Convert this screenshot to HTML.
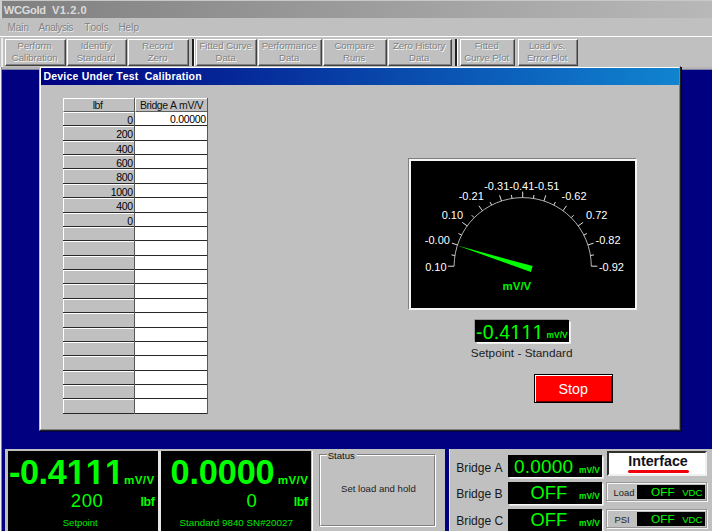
<!DOCTYPE html>
<html><head><meta charset="utf-8"><title>WCGold V1.2.0</title>
<style>
html,body{margin:0;padding:0;}
body{width:712px;height:531px;overflow:hidden;background:#000080;position:relative;font-family:"Liberation Sans",sans-serif;font-size:9px;color:#000;font-kerning:none;}
div,span{position:absolute;box-sizing:border-box;white-space:nowrap;}
#title{left:0;top:0;width:712px;height:19px;background:linear-gradient(90deg,#808080,#b8b8b8);border-top:1px solid #c8c8c8;border-left:2px solid #d0d0d0;border-bottom:1px solid #c0c0c0}
#menu{left:0;top:19px;width:712px;height:17px;background:#c0c0c0;}
.dis{color:#808080;text-shadow:0.7px 0.7px 0 #fff;}
#tool{left:0;top:36px;width:712px;height:31px;background:#c0c0c0;border-top:1px solid #fff;}
#mdiT{left:0;top:67px;width:712px;height:3px;background:#b4b4b4;border-bottom:1px solid #7e7ea4}
.tb{top:2px;height:27px;background:#c0c0c0;border:1px solid;border-color:#fff #404040 #404040 #fff;box-shadow:inset -1px -1px 0 #808080;color:#808080;text-align:center;font-size:9.65px;line-height:12.4px;padding-top:0;text-shadow:0.7px 0.7px 0 #fff;}
.tb i{font-style:normal;position:relative;display:block;margin:0 -6px;left:-0.8px;top:-0.1px}
.sep{top:2px;height:27px;width:3px;border-left:2px solid #202020;border-right:1px solid #fff;}
#mdiL{left:0;top:67px;width:1px;height:464px;background:#f4f4f4;box-shadow:1px 0 0 #8080b8;}
#win{left:39px;top:66px;width:642px;height:365px;background:#c0c0c0;border:1px solid #c0c0c0;border-right:1px solid #202020;border-bottom:1px solid #202020;box-shadow:1px 1px 0 #000050;}
#win:before{content:"";position:absolute;left:0;top:0;right:0;bottom:0;border:1px solid;border-color:#fff #808080 #808080 #fff;}
#wtitle{left:1px;top:1px;width:637.5px;height:17px;background:linear-gradient(90deg,#000080,#1084d0);}
#grid{left:63px;width:145px;background:#282828;}
.hc{background:#c0c0c0;border-top:1px solid #fff;border-left:1px solid #fff;border-bottom:1px solid #606060;text-align:center;font-size:10.5px;line-height:12px;letter-spacing:-0.45px;color:#101010}
.lc{background:#c0c0c0;border-top:1px solid #fff;border-left:1px solid #fff;text-align:right;font-size:10.5px;letter-spacing:-0.3px;padding-right:1.1px;}
.vc{background:#fff;text-align:right;font-size:10.5px;letter-spacing:-0.3px;padding-right:1.1px;}
.sunk{border:1px solid;border-color:#808080 #fff #fff #808080;background:#000;}
#gauge{left:411px;top:161px;width:224.4px;height:147.4px;background:#000;box-shadow:0 0 0 2px #f4f4f4,-1px -1px 0 2px #808080;}
#gauge svg{position:absolute;left:0;top:0;}
#dd{left:475px;top:320px;width:94.4px;height:22px;background:#000;box-shadow:1.7px 1.7px 0 0 #fff,-0.8px -0.8px 0 0 #909090;}
.g{color:#00ff00;}
#stop{left:534px;top:374px;width:78.5px;height:28.5px;background:#ff0000;border:1px solid #000;box-shadow:inset 1px 1px 0 #fff,inset -1px -1px 0 #600000;}
.pan{background:#c0c0c0;}
.blk{background:#000;}
</style></head><body>
<div id="title"></div>
<div id="menu"></div>
<div id="tool">
<div class="tb" style="left:5px;width:61px"><i>Perform<br>Calibration</i></div>
<div class="tb" style="left:67px;width:60px"><i>Identify<br>Standard</i></div>
<div class="tb" style="left:128px;width:61px"><i>Record<br>Zero</i></div>
<div class="tb" style="left:196px;width:61px"><i>Fitted Curve<br>Data</i></div>
<div class="tb" style="left:258px;width:64px"><i>Performance<br>Data</i></div>
<div class="tb" style="left:323px;width:64px"><i>Compare<br>Runs</i></div>
<div class="tb" style="left:388px;width:64px"><i>Zero History<br>Data</i></div>
<div class="tb" style="left:460px;width:55px"><i>Fitted<br>Curve Plot</i></div>
<div class="tb" style="left:518px;width:60px"><i>Load vs.<br>Error Plot</i></div>
<div style="left:1px;top:1px;width:1px;height:30px;background:#e6e6e6"></div><div style="left:2px;top:1px;width:1px;height:30px;background:#f2f2f2"></div>
<div class="sep" style="left:192px"></div><div class="sep" style="left:455px"></div>
</div>
<span style="top:3.15px;font-size:11.1px;line-height:14px;left:3.80px;color:#dcdcdc;font-weight:bold;"><i style="font-style:normal;letter-spacing:-0.3px">WCGold</i>&nbsp; <i style="font-style:normal;letter-spacing:0.55px">V1.2.0</i></span>
<span style="top:22.14px;font-size:10px;line-height:12px;left:7.40px;color:#808080;text-shadow:0.6px 0.6px 0 rgba(255,255,255,.75);">Main</span>
<span style="top:22.14px;font-size:10px;line-height:12px;left:38.60px;letter-spacing:-0.33px;color:#808080;text-shadow:0.6px 0.6px 0 rgba(255,255,255,.75);">Analysis</span>
<span style="top:22.14px;font-size:10px;line-height:12px;left:84.30px;color:#808080;text-shadow:0.6px 0.6px 0 rgba(255,255,255,.75);">Tools</span>
<span style="top:22.14px;font-size:10px;line-height:12px;left:118.40px;color:#808080;text-shadow:0.6px 0.6px 0 rgba(255,255,255,.75);">Help</span>
<div id="mdiT"></div><div id="mdiL"></div>
<div id="win"><div id="wtitle"></div></div>
<span style="top:70.06px;font-size:10.5px;line-height:13px;left:43.50px;color:#fff;font-weight:bold;letter-spacing:0.2px;white-space:pre;">Device Under Test  Calibration</span>
<div id="grid" style="top:98px;height:316px">
<div class="hc" style="left:0;top:0;width:71px;height:14px;padding-right:3px">lbf</div>
<div class="hc" style="left:72px;top:0;width:72px;height:14px">Bridge A mV/V</div>
<div class="lc" style="left:0;top:14px;width:71px;height:13px;line-height:14px">0</div>
<div class="vc" style="left:72px;top:14px;width:72px;height:13px;line-height:15px">0.00000</div>
<div class="lc" style="left:0;top:28px;width:71px;height:14px;line-height:15px">200</div>
<div class="vc" style="left:72px;top:28px;width:72px;height:14px;line-height:16px"></div>
<div class="lc" style="left:0;top:43px;width:71px;height:13px;line-height:14px">400</div>
<div class="vc" style="left:72px;top:43px;width:72px;height:13px;line-height:15px"></div>
<div class="lc" style="left:0;top:57px;width:71px;height:13px;line-height:14px">600</div>
<div class="vc" style="left:72px;top:57px;width:72px;height:13px;line-height:15px"></div>
<div class="lc" style="left:0;top:71px;width:71px;height:14px;line-height:15px">800</div>
<div class="vc" style="left:72px;top:71px;width:72px;height:14px;line-height:16px"></div>
<div class="lc" style="left:0;top:86px;width:71px;height:13px;line-height:14px">1000</div>
<div class="vc" style="left:72px;top:86px;width:72px;height:13px;line-height:15px"></div>
<div class="lc" style="left:0;top:100px;width:71px;height:14px;line-height:15px">400</div>
<div class="vc" style="left:72px;top:100px;width:72px;height:14px;line-height:16px"></div>
<div class="lc" style="left:0;top:115px;width:71px;height:13px;line-height:14px">0</div>
<div class="vc" style="left:72px;top:115px;width:72px;height:13px;line-height:15px"></div>
<div class="lc" style="left:0;top:129px;width:71px;height:13px;line-height:14px"></div>
<div class="vc" style="left:72px;top:129px;width:72px;height:13px;line-height:15px"></div>
<div class="lc" style="left:0;top:143px;width:71px;height:14px;line-height:15px"></div>
<div class="vc" style="left:72px;top:143px;width:72px;height:14px;line-height:16px"></div>
<div class="lc" style="left:0;top:158px;width:71px;height:13px;line-height:14px"></div>
<div class="vc" style="left:72px;top:158px;width:72px;height:13px;line-height:15px"></div>
<div class="lc" style="left:0;top:172px;width:71px;height:13px;line-height:14px"></div>
<div class="vc" style="left:72px;top:172px;width:72px;height:13px;line-height:15px"></div>
<div class="lc" style="left:0;top:186px;width:71px;height:14px;line-height:15px"></div>
<div class="vc" style="left:72px;top:186px;width:72px;height:14px;line-height:16px"></div>
<div class="lc" style="left:0;top:201px;width:71px;height:13px;line-height:14px"></div>
<div class="vc" style="left:72px;top:201px;width:72px;height:13px;line-height:15px"></div>
<div class="lc" style="left:0;top:215px;width:71px;height:14px;line-height:15px"></div>
<div class="vc" style="left:72px;top:215px;width:72px;height:14px;line-height:16px"></div>
<div class="lc" style="left:0;top:230px;width:71px;height:13px;line-height:14px"></div>
<div class="vc" style="left:72px;top:230px;width:72px;height:13px;line-height:15px"></div>
<div class="lc" style="left:0;top:244px;width:71px;height:13px;line-height:14px"></div>
<div class="vc" style="left:72px;top:244px;width:72px;height:13px;line-height:15px"></div>
<div class="lc" style="left:0;top:258px;width:71px;height:14px;line-height:15px"></div>
<div class="vc" style="left:72px;top:258px;width:72px;height:14px;line-height:16px"></div>
<div class="lc" style="left:0;top:273px;width:71px;height:13px;line-height:14px"></div>
<div class="vc" style="left:72px;top:273px;width:72px;height:13px;line-height:15px"></div>
<div class="lc" style="left:0;top:287px;width:71px;height:13px;line-height:14px"></div>
<div class="vc" style="left:72px;top:287px;width:72px;height:13px;line-height:15px"></div>
<div class="lc" style="left:0;top:301px;width:71px;height:14px;line-height:15px"></div>
<div class="vc" style="left:72px;top:301px;width:72px;height:14px;line-height:16px"></div>
<div style="left:71px;top:0;width:1px;height:100%;background:#585858"></div><div style="left:144px;top:0;width:1px;height:100%;background:#585858"></div>
</div>
<div id="gauge"><svg width="224" height="147" viewBox="0 0 224 147" font-family="Liberation Sans, sans-serif" font-size="11" fill="#fff" style="font-kerning:none"><path d="M43.10000000000005,105.19999999999999 A68.6,68.6 0 0 1 180.30000000000004,105.19999999999999" fill="none" stroke="#b0b0b0" stroke-width="1"/><line x1="43.1" y1="105.2" x2="37.1" y2="105.2" stroke="#e0e0e0" stroke-width="1"/><line x1="43.9" y1="94.5" x2="40.5" y2="93.9" stroke="#e0e0e0" stroke-width="1"/><line x1="46.5" y1="84.0" x2="40.8" y2="82.1" stroke="#e0e0e0" stroke-width="1"/><line x1="50.6" y1="74.1" x2="47.5" y2="72.5" stroke="#e0e0e0" stroke-width="1"/><line x1="56.2" y1="64.9" x2="51.3" y2="61.4" stroke="#e0e0e0" stroke-width="1"/><line x1="63.2" y1="56.7" x2="60.7" y2="54.2" stroke="#e0e0e0" stroke-width="1"/><line x1="71.4" y1="49.7" x2="67.9" y2="44.8" stroke="#e0e0e0" stroke-width="1"/><line x1="80.6" y1="44.1" x2="79.0" y2="41.0" stroke="#e0e0e0" stroke-width="1"/><line x1="90.5" y1="40.0" x2="88.6" y2="34.3" stroke="#e0e0e0" stroke-width="1"/><line x1="101.0" y1="37.4" x2="100.4" y2="34.0" stroke="#e0e0e0" stroke-width="1"/><line x1="111.7" y1="36.6" x2="111.7" y2="30.6" stroke="#e0e0e0" stroke-width="1"/><line x1="122.4" y1="37.4" x2="123.0" y2="34.0" stroke="#e0e0e0" stroke-width="1"/><line x1="132.9" y1="40.0" x2="134.8" y2="34.3" stroke="#e0e0e0" stroke-width="1"/><line x1="142.8" y1="44.1" x2="144.4" y2="41.0" stroke="#e0e0e0" stroke-width="1"/><line x1="152.0" y1="49.7" x2="155.5" y2="44.8" stroke="#e0e0e0" stroke-width="1"/><line x1="160.2" y1="56.7" x2="162.7" y2="54.2" stroke="#e0e0e0" stroke-width="1"/><line x1="167.2" y1="64.9" x2="172.1" y2="61.4" stroke="#e0e0e0" stroke-width="1"/><line x1="172.8" y1="74.1" x2="175.9" y2="72.5" stroke="#e0e0e0" stroke-width="1"/><line x1="176.9" y1="84.0" x2="182.6" y2="82.1" stroke="#e0e0e0" stroke-width="1"/><line x1="179.5" y1="94.5" x2="182.9" y2="93.9" stroke="#e0e0e0" stroke-width="1"/><line x1="180.3" y1="105.2" x2="186.3" y2="105.2" stroke="#e0e0e0" stroke-width="1"/><text x="14.2" y="109.8">0.10</text><text x="13.8" y="82.6">-0.00</text><text x="30.7" y="57.5">0.10</text><text x="47.7" y="39.0">-0.21</text><text x="73.2" y="28.8">-0.31-0.41-0.51</text><text x="150.5" y="39.0">-0.62</text><text x="175.0" y="57.5">0.72</text><text x="184.5" y="82.6">-0.82</text><text x="187.9" y="109.8">-0.92</text><polygon points="46.3,84.6 121.7,105.1 119.8,111.0" fill="#00ff00"/><text x="105.9" y="128.8" fill="#00f000" font-weight="bold" font-size="10.3" text-anchor="middle" textLength="28.6" lengthAdjust="spacingAndGlyphs">mV/V</text></svg></div>
<div id="dd"></div>
<span style="top:320.01px;font-size:19.6px;line-height:24px;left:476.00px;color:#00ff00;letter-spacing:0.15px;">-0.4111</span>
<span style="top:330.39px;font-size:8.4px;line-height:11px;left:546.60px;color:#00f000;font-weight:bold;">mV/V</span>
<span style="top:345.91px;font-size:11.8px;line-height:15px;left:371.70px;width:300px;text-align:center;color:#202020;">Setpoint - Standard</span>
<div id="stop"></div>
<span style="top:380.05px;font-size:14.3px;line-height:18px;left:423.30px;width:300px;text-align:center;color:#fff;">Stop</span>
<div class="pan" style="left:5px;top:448.5px;width:440px;height:83px"></div>
<div class="blk" style="left:8px;top:451.3px;width:149.8px;height:80px"></div>
<div class="blk" style="left:161px;top:451.3px;width:150.3px;height:80px"></div>
<div style="left:158.3px;top:451px;width:2.4px;height:80px;background:#e8e8e8"></div>
<div style="left:311.5px;top:450.5px;width:1.5px;height:81px;background:#fff"></div>
<span style="top:451.32px;font-size:34.3px;line-height:42px;left:9.00px;color:#00ff00;font-weight:bold;letter-spacing:0px;"><i style="font-style:normal;letter-spacing:-0.45px">-0.</i>4111</span>
<span style="top:473.18px;font-size:11.6px;line-height:14px;left:124.00px;color:#00ff00;font-weight:bold;letter-spacing:0.4px;">mV/V</span>
<span style="top:488.59px;font-size:18.5px;line-height:23px;right:608.50px;color:#00ff00;letter-spacing:0.6px;">200</span>
<span style="top:495.24px;font-size:12.3px;line-height:15px;left:140.50px;color:#00ff00;font-weight:bold;letter-spacing:-0.3px;">lbf</span>
<span style="top:516.71px;font-size:9.5px;line-height:12px;left:-69.80px;width:300px;text-align:center;color:#00e800;">Setpoint</span>
<span style="top:451.32px;font-size:34.3px;line-height:42px;left:170.50px;color:#00ff00;font-weight:bold;letter-spacing:-0.15px;">0.0000</span>
<span style="top:473.18px;font-size:11.6px;line-height:14px;left:277.70px;color:#00ff00;font-weight:bold;letter-spacing:0.4px;">mV/V</span>
<span style="top:488.59px;font-size:18.5px;line-height:23px;right:454.70px;color:#00ff00;letter-spacing:0.6px;">0</span>
<span style="top:495.24px;font-size:12.3px;line-height:15px;left:293.70px;color:#00ff00;font-weight:bold;letter-spacing:-0.3px;">lbf</span>
<span style="top:516.60px;font-size:9.8px;line-height:12px;left:86.20px;width:300px;text-align:center;color:#00e800;">Standard 9840 SN#20027</span>
<div style="left:319px;top:454px;width:117px;height:73px;border:1px solid;border-color:#808080 #fff #fff #808080;"><div style="left:0;top:0;right:0;bottom:0;border:1px solid;border-color:#fff #808080 #808080 #fff"></div></div>
<div class="pan" style="left:326.5px;top:452px;width:30px;height:8px"></div>
<span style="top:449.67px;font-size:9.6px;line-height:12px;left:327.70px;color:#101010;">Status</span>
<span style="top:482.87px;font-size:9.6px;line-height:12px;left:228.40px;width:300px;text-align:center;color:#202020;">Set load and hold</span>
<div class="pan" style="left:449.3px;top:448.5px;width:263px;height:83px;border-left:1px solid #e8e8e8"></div>
<span style="top:460.51px;font-size:12.1px;line-height:15px;left:456.30px;color:#181818;">Bridge A</span>
<div class="blk" style="left:507.6px;top:454.8px;width:94.8px;height:22.2px;box-shadow:1.6px 1.6px 0 #f8f8f8"></div>
<span style="top:454.92px;font-size:19px;line-height:23px;left:514.00px;color:#00ff00;letter-spacing:0.2px;">0.0000</span>
<span style="top:464.59px;font-size:8.4px;line-height:11px;left:579.00px;color:#00f000;font-weight:bold;">mV/V</span>
<span style="top:486.71px;font-size:12.1px;line-height:15px;left:456.30px;color:#181818;">Bridge B</span>
<div class="blk" style="left:507.6px;top:481.8px;width:94.8px;height:22.2px;box-shadow:1.6px 1.6px 0 #f8f8f8"></div>
<span style="top:481.86px;font-size:18.3px;line-height:22px;left:530.50px;color:#00ff00;letter-spacing:0px;">OFF</span>
<span style="top:490.79px;font-size:8.4px;line-height:11px;left:579.00px;color:#00f000;font-weight:bold;">mV/V</span>
<span style="top:514.01px;font-size:12.1px;line-height:15px;left:456.30px;color:#181818;">Bridge C</span>
<div class="blk" style="left:507.6px;top:508.8px;width:94.8px;height:22.2px;box-shadow:1.6px 1.6px 0 #f8f8f8"></div>
<span style="top:509.06px;font-size:18.3px;line-height:22px;left:530.50px;color:#00ff00;letter-spacing:0px;">OFF</span>
<span style="top:517.99px;font-size:8.4px;line-height:11px;left:579.00px;color:#00f000;font-weight:bold;">mV/V</span>
<div style="left:606.6px;top:450.6px;width:100.8px;height:25px;background:#fff;border:2px solid;border-color:#303030 #f0f0f0 #f0f0f0 #303030;"></div>
<span style="top:452.05px;font-size:14.3px;line-height:18px;left:508.00px;width:300px;text-align:center;color:#101018;font-weight:bold;">Interface</span>
<div style="left:627.5px;top:469.5px;width:61.4px;height:3px;border-radius:1.5px;background:#f00008"></div>
<div style="left:606px;top:482px;width:101px;height:19px;background:#c0c0c0;border:1px solid #989898;box-shadow:inset 1px 1px 0 #f4f4f4,1px 1px 0 #f4f4f4;"></div>
<div class="blk" style="left:637px;top:485px;width:67.6px;height:14px"></div>
<span style="top:486.54px;font-size:9.4px;line-height:12px;left:613.50px;color:#202020;">Load</span>
<span style="top:484.61px;font-size:11.8px;line-height:15px;left:651.00px;color:#00ff00;">OFF</span>
<span style="top:486.91px;font-size:9.5px;line-height:12px;left:682.20px;color:#00ff00;">VDC</span>
<div style="left:606px;top:509px;width:101px;height:19px;background:#c0c0c0;border:1px solid #989898;box-shadow:inset 1px 1px 0 #f4f4f4,1px 1px 0 #f4f4f4;"></div>
<div class="blk" style="left:637px;top:512px;width:67.6px;height:14px"></div>
<span style="top:513.94px;font-size:9.4px;line-height:12px;left:614.50px;color:#202020;">PSI</span>
<span style="top:512.01px;font-size:11.8px;line-height:15px;left:651.00px;color:#00ff00;">OFF</span>
<span style="top:514.31px;font-size:9.5px;line-height:12px;left:682.20px;color:#00ff00;">VDC</span>
<svg style="position:absolute;left:0;top:0" width="712" height="531" fill="#000"><rect x="510.9" y="336.7" width="4.14" height="2.60"/><rect x="517.03" y="336.7" width="9.27" height="2.60"/><rect x="528.26" y="336.7" width="9.04" height="2.60"/><rect x="539.26" y="336.7" width="4.04" height="2.60"/></svg>
<svg style="position:absolute;left:0;top:0" width="712" height="531" fill="#000"><rect x="67.9" y="479.7" width="6.76" height="4.70"/><rect x="79.56" y="479.7" width="14.10" height="4.70"/><rect x="98.56" y="479.7" width="14.32" height="4.70"/><rect x="117.81" y="479.7" width="5.89" height="4.70"/></svg>
</body></html>
